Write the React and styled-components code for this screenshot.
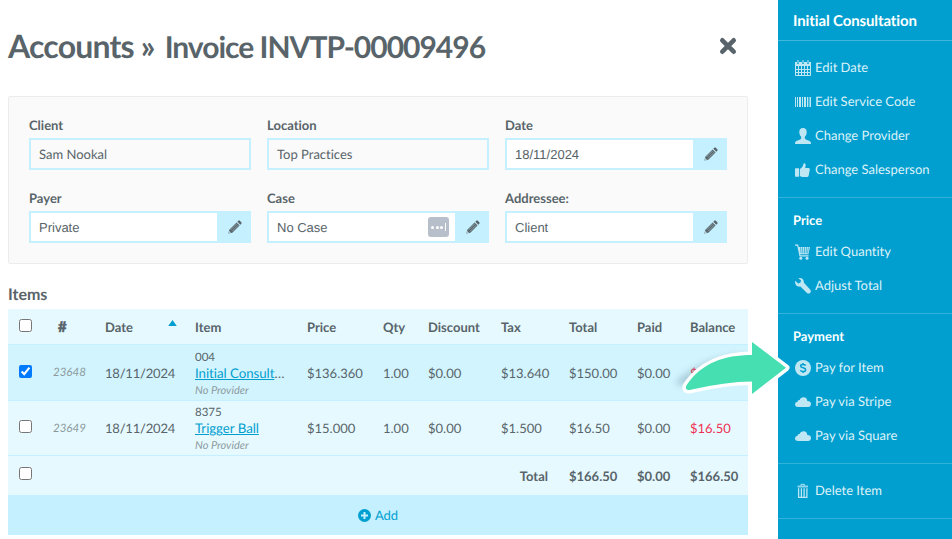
import React from "react";
import styled, { createGlobalStyle, css } from "styled-components";

const colors = {
  text: "#586469",
  muted: "#8d9ba0",
  blue: "#009fd0",
  pale: "#e6f9ff",
  selected: "#d2f4ff",
  sky: "#c5f0ff",
  red: "#ee3152",
  green: "#46dfb1"
};

const GlobalStyle = createGlobalStyle`
  * {
    box-sizing: border-box;
  }
  body {
    margin: 0;
    background: #fff;
    color: ${colors.text};
    font-family: Lato, sans-serif;
    font-size: 13px;
    font-variant-ligatures: none;
    text-rendering: geometricPrecision;
    overflow: hidden;
  }
`;

const Page = styled.div`
  display: flex;
  position: relative;
  width: 952px;
  height: 539px;
  overflow: hidden;
`;

const Main = styled.main`
  width: 778px;
  padding: 0 30px 0 8px;
`;

const Header = styled.header`
  display: flex;
  justify-content: space-between;
  align-items: center;
  height: 96px;
  padding: 0 11px 4px 0;
  & svg {
    display: block;
  }
`;

const Title = styled.h1`
  margin: 0;
  font-size: 32px;
  line-height: 40px;
  font-weight: 700;
  letter-spacing: -0.8px;
  white-space: pre;
`;

const Subtitle = styled.span`
  margin-left: 3px;
  font-size: 30px;
  letter-spacing: -1px;
`;

const Details = styled.section`
  display: grid;
  grid-template-columns: repeat(3, 222px);
  column-gap: 16px;
  align-content: start;
  height: 168px;
  padding: 19px 20px 0;
  border: 1px solid #ececec;
  border-radius: 2px;
  background: #fafafa;
`;

const Field = styled.div`
  height: 73px;
`;

const Label = styled.label`
  display: block;
  height: 22px;
  line-height: 19px;
  font-weight: 700;
`;

const Control = styled.div`
  display: flex;
  align-items: center;
  height: 32px;
  padding-left: 8px;
  border: 2px solid ${colors.sky};
  background: ${props => (props.$readOnly ? "transparent" : "#fff")};
  font-family: ${props =>
    props.$readOnly ? "Lato" : '"Liberation Sans"'}, sans-serif;
  font-size: 13px;
`;

const Value = styled.span`
  flex: 1;
`;

const EditButton = styled.div`
  display: flex;
  align-items: center;
  justify-content: center;
  width: 32px;
  height: 28px;
  padding-left: 3px;
  background: ${colors.sky};
`;

const Dots = styled.div`
  display: flex;
  align-items: center;
  justify-content: center;
  gap: 1.6px;
  width: 21px;
  height: 20px;
  margin-right: 6px;
  border-radius: 3px;
  background: #b7bfca;
  & i {
    width: 3px;
    height: 3px;
    border-radius: 50%;
    background: #fff;
  }
  & i:last-child {
    width: 1px;
    height: 8px;
    border-radius: 0;
  }
`;

const H2 = styled.h2`
  height: 45px;
  margin: 0;
  padding-top: 21px;
  font-size: 16px;
  line-height: 20px;
  font-weight: 700;
`;

const Row = styled.div`
  display: grid;
  grid-template-columns: 35px 52px 90px 112px 76px 45px 73px 68px 68px 53px 68px;
  align-items: center;
  height: ${props => props.$height}px;
  border-bottom: ${props => props.$line || 0}px solid ${colors.sky};
  background: ${props => (props.$selected ? colors.selected : colors.pale)};
  ${props =>
    props.$bold &&
    css`
      font-weight: 700;
    `}
`;

const Cell = styled.div`
  padding-left: 10px;
  line-height: 18px;
  white-space: nowrap;
  color: ${props => (props.$red ? colors.red : "inherit")};
`;

const DateCell = styled(Cell)`
  letter-spacing: -0.2px;
`;

const CheckCell = styled.div`
  display: flex;
  padding: 0 0 ${props => props.$lift}px 11px;
`;

const Checkbox = styled.input`
  width: 13px;
  height: 13px;
  margin: 0;
  accent-color: #007aff;
`;

const Hash = styled(Cell)`
  padding-left: 15px;
  font-size: 15px;
  font-weight: 900;
  -webkit-text-stroke: 0.4px ${colors.text};
`;

const Sortable = styled(Cell)`
  display: flex;
  justify-content: space-between;
  padding-right: 8px;
  & svg {
    margin-top: -1px;
  }
`;

const Id = styled(Cell)`
  padding-top: 1px;
  color: ${colors.muted};
  font-size: 11.5px;
  font-style: italic;
`;

const ItemCell = styled.div`
  padding: 3px 0 0 10px;
  & small {
    display: block;
    font-size: 11.5px;
    line-height: 15px;
  }
  & em {
    display: block;
    color: ${colors.muted};
    font-size: 11px;
    line-height: 17px;
  }
`;

const ItemLink = styled.div`
  font-size: 13.3px;
  line-height: 17px;
  white-space: nowrap;
  letter-spacing: -0.05px;
  & a {
    color: ${colors.blue};
    text-decoration: underline;
  }
`;

const TotalLabel = styled(Cell)`
  grid-column: 2 / 9;
  padding-right: 11px;
  text-align: right;
`;

const AddBar = styled.div`
  display: flex;
  align-items: center;
  justify-content: center;
  gap: 4px;
  height: 40px;
  background: ${colors.sky};
  color: ${colors.blue};
`;

const Sidebar = styled.aside`
  width: 174px;
  background: ${colors.blue};
  color: #fff;
`;

const SideTitle = styled.div`
  height: 41px;
  padding-left: 15px;
  border-bottom: 1px solid rgba(255, 255, 255, 0.25);
  font-size: 15px;
  line-height: 42px;
  font-weight: 700;
  letter-spacing: -0.12px;
`;

const Group = styled.section`
  padding: ${props => (props.$headed ? 8 : 9)}px 0 11px 15px;
  border-bottom: 1px solid rgba(255, 255, 255, 0.2);
  & h3 {
    margin: 0;
    font-size: 13px;
    line-height: 28px;
    font-weight: 700;
  }
`;

const Action = styled.div`
  display: flex;
  align-items: center;
  gap: 4px;
  height: 34px;
  padding-left: 2px;
  color: rgba(255, 255, 255, 0.87);
  white-space: nowrap;
  & svg {
    flex: none;
    margin-top: 1px;
    opacity: 0.75;
  }
`;

const Arrow = styled.svg`
  position: absolute;
  left: 660px;
  top: 330px;
`;

const Pencil = () => (
  <svg width="14" height="14" viewBox="0 0 14 14" fill={colors.text}>
    <path d="M.4 13.6 1.3 9.7 8.6 2.4 11.6 5.4 4.3 12.7Z" />
    <path d="M9.3 1.7 10.3.7Q11-.1 11.8.7L13.3 2.2Q14 3 13.3 3.7L12.3 4.7Z" />
    <path d="M2.6 10 9 3.6M4 11.4 10.4 5" stroke={colors.sky} strokeWidth=".45" />
    <path d="m1.3 11.1 1.6 1.6-1.2.4-.8-.8Z" fill={colors.sky} />
  </svg>
);

const icons = {
  calendar: (
    <>
      <path d="M0 2H2V4H4V2H7V4H9V2H12V4H14V2H16V6H0Z" />
      <path d="M2.5 0h1v3.5h-1zM7.5 0h1v3.5h-1zM12.5 0h1v3.5h-1z" />
      <path
        d="M.5 6v9.5h15V6M3.5 6v9.5M6.5 6v9.5M9.5 6v9.5M12.5 6v9.5M0 9.5h16M0 12.5h16"
        fill="none"
        stroke="#fff"
      />
    </>
  ),
  barcode: (
    <path d="M0 3h1v10H0zM2 3h1v10H2zM4 3h2v10H4zM7 3h1v10H7zM9 3h2v10H9zM12 3h1v10h-1zM13.7 3h.8v10h-.8zM15 3h1v10h-1z" />
  ),
  user: (
    <path d="M8 0C5.4 0 4.2 1.8 4.3 4.2 4.3 6.3 5.2 7.8 6.2 8.7V10.2Q6 11.4 4 12L1.3 13Q0 13.6 0 16H16Q16 13.6 14.7 13L12 12Q10 11.4 9.8 10.2V8.7C10.8 7.8 11.7 6.3 11.7 4.2 11.8 1.8 10.6 0 8 0Z" />
  ),
  thumb: (
    <>
      <path d="M.8 6.2H3.4Q4.2 6.2 4.2 7V14Q4.2 14.8 3.4 14.8H.8Q0 14.8 0 14V7Q0 6.2.8 6.2Z" />
      <path d="M5 7Q7.8 5.5 8.3 2.5 8.5 1 9.7 1.3 11 1.8 10.6 4L10.2 6H13.7Q15 6.2 14.8 7.6L13.7 13.5Q13.4 15 12 15H8Q6.2 15 5 14Z" />
    </>
  ),
  cart: (
    <>
      <path
        d="M0 1.2H2.7L5 11.8H13.6"
        fill="none"
        stroke="#fff"
        strokeWidth="1.2"
      />
      <path d="M3.3 3H15L13.4 10.3H4.9Z" />
      <path
        d="m5.5 3.3.6 6M7.5 3.3l.3 6M9.5 3.3l-.1 6M11.5 3.3l-.5 6M13.4 3.3l-.9 6"
        stroke={colors.blue}
        strokeWidth=".65"
      />
      <circle cx="5.8" cy="14.3" r="1.5" />
      <circle cx="12" cy="14.3" r="1.5" />
    </>
  ),
  wrench: (
    <path d="M.3 2.8 3.2 5.4 5.5 4.6 6 2.2 3.3.3C6-.7 9.2 1 8.9 4.7L15.3 11.8C17 14 14 16.8 12 15L5.4 8.6C2 9.5-.7 6.5.3 2.8Z" />
  ),
  coin: (
    <>
      <circle cx="8" cy="8" r="8" />
      <path
        d="M10.7 5.4Q9.9 4.5 8 4.5 5.6 4.5 5.6 6.1 5.6 7.4 8 7.8 10.6 8.3 10.6 9.9 10.6 11.5 8 11.5 6.1 11.5 5.2 10.4M8 3v1.5M8 11.5v1.5"
        fill="none"
        stroke={colors.blue}
        strokeWidth="1.5"
      />
    </>
  ),
  cloud: (
    <path d="M3.1 13Q0 12.8 0 10.2.1 7.9 2.5 7.8 2.5 5.7 4.7 6 5.6 3.2 8.7 3.3 12 3.6 12.3 7 16 7 16 10.1 15.8 12.9 13 13Z" />
  ),
  trash: (
    <>
      <path d="M2.5 2.4H5.5V1.6Q5.5.8 6.3.8H9.2Q10 .8 10 1.6V2.4H13V4.6H2.5ZM6.7 1.9V2.4H8.8V1.9Z" opacity=".75" />
      <path
        d="M3.6 5.3V14.3H11.9V5.3M6.4 5.3v9M9.1 5.3v9"
        fill="none"
        stroke="#fff"
        strokeWidth="1.3"
      />
    </>
  )
};

const Icon = ({ name }) => (
  <svg width="16" height="16" viewBox="0 0 16 16" fill="#fff">
    {icons[name]}
  </svg>
);

const fields = [
  { label: "Client", value: "Sam Nookal", readOnly: true },
  { label: "Location", value: "Top Practices", readOnly: true },
  { label: "Date", value: "18/11/2024" },
  { label: "Payer", value: "Private" },
  { label: "Case", value: "No Case", dots: true },
  { label: "Addressee:", value: "Client" }
];

const items = [
  {
    id: "23648",
    code: "004",
    name: "Initial Consult",
    more: true,
    values: ["$136.360", "1.00", "$0.00", "$13.640", "$150.00", "$0.00"],
    balance: "$150.00",
    selected: true
  },
  {
    id: "23649",
    code: "8375",
    name: "Trigger Ball",
    values: ["$15.000", "1.00", "$0.00", "$1.500", "$16.50", "$0.00"],
    balance: "$16.50"
  }
];

const groups = [
  {
    actions: [
      ["calendar", "Edit Date"],
      ["barcode", "Edit Service Code"],
      ["user", "Change Provider"],
      ["thumb", "Change Salesperson"]
    ]
  },
  {
    heading: "Price",
    actions: [["cart", "Edit Quantity"], ["wrench", "Adjust Total"]]
  },
  {
    heading: "Payment",
    actions: [
      ["coin", "Pay for Item"],
      ["cloud", "Pay via Stripe"],
      ["cloud", "Pay via Square"]
    ]
  },
  { actions: [["trash", "Delete Item"]] }
];

const headings = ["Price", "Qty", "Discount", "Tax", "Total", "Paid", "Balance"];

const arrowPath =
  "M27 54.6C42 33 64 25 92 25V12L126 37.7 92 64V51.5Q66 51.5 29.5 60C25.6 60.6 24.8 57.3 27 54.6Z";

const App = () => (
  <Page>
    <GlobalStyle />
    <Main>
      <Header>
        <Title>
          Accounts » <Subtitle>Invoice INVTP-00009496</Subtitle>
        </Title>
        <svg width="18" height="18" viewBox="0 0 18 18">
          <path
            d="M3.3 3.3 14.7 14.7M14.7 3.3 3.3 14.7"
            stroke={colors.text}
            strokeWidth="4.6"
            strokeLinecap="round"
          />
        </svg>
      </Header>

      <Details>
        {fields.map(field => (
          <Field key={field.label}>
            <Label>{field.label}</Label>
            <Control $readOnly={field.readOnly}>
              <Value>{field.value}</Value>
              {field.dots && (
                <Dots>
                  <i />
                  <i />
                  <i />
                  <i />
                </Dots>
              )}
              {!field.readOnly && (
                <EditButton>
                  <Pencil />
                </EditButton>
              )}
            </Control>
          </Field>
        ))}
      </Details>

      <H2>Items</H2>
      <Row $height={36} $line={1} $bold>
        <CheckCell $lift={3}>
          <Checkbox type="checkbox" />
        </CheckCell>
        <Hash>#</Hash>
        <Sortable>
          Date
          <svg width="9" height="12" viewBox="0 0 9 12">
            <path d="M4.5 3 8.8 9H.2Z" fill={colors.blue} />
          </svg>
        </Sortable>
        <Cell>Item</Cell>
        {headings.map(text => (
          <Cell key={text}>{text}</Cell>
        ))}
      </Row>
      {items.map(item => (
        <Row
          key={item.id}
          $height={item.selected ? 56 : 55}
          $line={1}
          $selected={item.selected}
        >
          <CheckCell $lift={3}>
            <Checkbox type="checkbox" defaultChecked={item.selected} />
          </CheckCell>
          <Id>{item.id}</Id>
          <DateCell>18/11/2024</DateCell>
          <ItemCell>
            <small>{item.code}</small>
            <ItemLink>
              <a>{item.name}</a>
              {item.more && "…"}
            </ItemLink>
            <em>No Provider</em>
          </ItemCell>
          {item.values.map((value, i) => (
            <Cell key={i}>{value}</Cell>
          ))}
          <Cell $red>{item.balance}</Cell>
        </Row>
      ))}
      <Row $height={39} $bold>
        <CheckCell $lift={4}>
          <Checkbox type="checkbox" />
        </CheckCell>
        <TotalLabel>Total</TotalLabel>
        <Cell>$166.50</Cell>
        <Cell>$0.00</Cell>
        <Cell>$166.50</Cell>
      </Row>
      <AddBar>
        <svg width="13" height="13" viewBox="0 0 13 13">
          <circle cx="6.5" cy="6.5" r="6.5" fill={colors.blue} />
          <path d="M6.5 3v7M3 6.5h7" stroke={colors.sky} strokeWidth="2" />
        </svg>
        Add
      </AddBar>
    </Main>

    <Sidebar>
      <SideTitle>Initial Consultation</SideTitle>
      {groups.map((group, i) => (
        <Group key={i} $headed={!!group.heading}>
          {group.heading && <h3>{group.heading}</h3>}
          {group.actions.map(([icon, text]) => (
            <Action key={text}>
              <Icon name={icon} />
              {text}
            </Action>
          ))}
        </Group>
      ))}
    </Sidebar>

    <Arrow width="136" height="74" viewBox="0 0 136 74">
      <defs>
        <filter id="soft" x="-20%" y="-20%" width="140%" height="140%">
          <feGaussianBlur stdDeviation="3" />
        </filter>
      </defs>
      <path
        d="M14 53C34 34 58 25 86 24V40L30 58Z"
        fill="#3c6678"
        opacity=".25"
        filter="url(#soft)"
      />
      <path
        d={arrowPath}
        fill="#fff"
        stroke="#fff"
        strokeWidth="7"
        strokeLinejoin="round"
      />
      <path d={arrowPath} fill={colors.green} />
    </Arrow>
  </Page>
);

export default App;
